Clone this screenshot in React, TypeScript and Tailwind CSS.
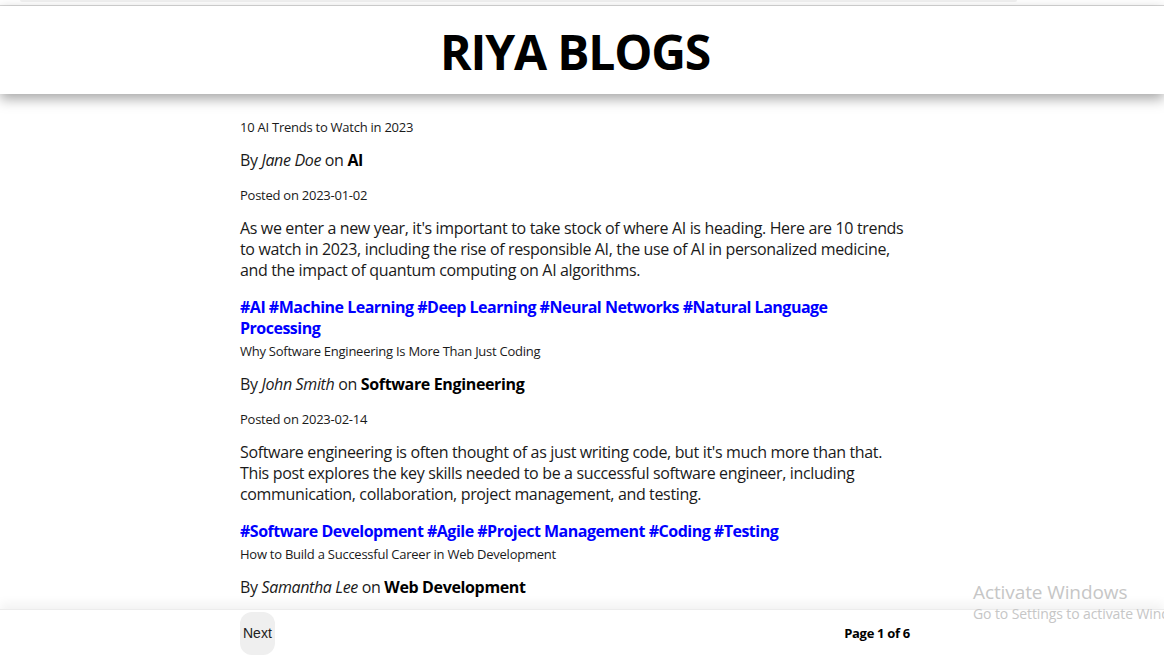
const posts = [
  {
    title: "10 AI Trends to Watch in 2023",
    author: "Jane Doe",
    category: "AI",
    date: "2023-01-02",
    body: "As we enter a new year, it's important to take stock of where AI is heading. Here are 10 trends to watch in 2023, including the rise of responsible AI, the use of AI in personalized medicine, and the impact of quantum computing on AI algorithms.",
    tags: ["AI", "Machine Learning", "Deep Learning", "Neural Networks", "Natural Language Processing"],
  },
  {
    title: "Why Software Engineering Is More Than Just Coding",
    author: "John Smith",
    category: "Software Engineering",
    date: "2023-02-14",
    body: "Software engineering is often thought of as just writing code, but it's much more than that. This post explores the key skills needed to be a successful software engineer, including communication, collaboration, project management, and testing.",
    tags: ["Software Development", "Agile", "Project Management", "Coding", "Testing"],
  },
  {
    title: "How to Build a Successful Career in Web Development",
    author: "Samantha Lee",
    category: "Web Development",
    date: "2023-03-08",
    body: "Web development is a fast-growing field with plenty of opportunities. Here is what it takes to build a long and rewarding career.",
    tags: ["Web Development", "Career"],
  },
];

export default function App() {
  return (
    <div className="relative h-[655px] w-[1164px] overflow-hidden bg-white text-[#1a1a1a] font-['Open_Sans',sans-serif] flex flex-col">
      {/* top strip */}
      <div className="h-[6px] shrink-0 border-b border-[#d9d9d9] flex">
        <div className="ml-[20px] h-[2px] w-[997px] rounded-b bg-[#f1f1f1]" />
      </div>

      <header className="relative z-10 h-[88px] shrink-0 bg-white shadow-[0_5px_12px_rgba(0,0,0,0.35)] pr-[14px] pt-[4px] flex items-center justify-center">
        <h1 className="text-[48px] font-bold tracking-[-1.2px] text-black leading-none">RIYA BLOGS</h1>
      </header>

      <main className="flex-1 overflow-hidden pr-[14px] pt-[25px]">
        <div className="mx-auto w-[670px]">
          {posts.map((post) => (
            <article key={post.title}>
              <h2 className="text-[13px] leading-[17px] tracking-[-0.25px] mb-[14px]">{post.title}</h2>
              <p className="text-[16px] leading-[21px] tracking-[-0.35px] mb-[16px]">
                By <em>{post.author}</em> on <strong className="font-bold text-black">{post.category}</strong>
              </p>
              <p className="text-[13px] leading-[17px] tracking-[-0.25px] mb-[14px]">Posted on {post.date}</p>
              <p className="text-[16px] leading-[21px] tracking-[-0.35px] mb-[16px]">{post.body}</p>
              <p className="text-[16px] leading-[21px] tracking-[-0.5px] font-bold text-[#0000ff] mb-[4px] pr-[80px]">
                {post.tags.map((t) => "#" + t).join(" ")}
              </p>
            </article>
          ))}
        </div>
      </main>

      <footer className="relative z-10 h-[46px] shrink-0 bg-white border-t border-[#ececec] shadow-[0_-6px_10px_rgba(0,0,0,0.05)] pr-[14px] pt-[2px]">
        <div className="mx-auto w-[670px] flex items-center justify-between">
          <button className="h-[43px] rounded-[12px] bg-[#efefef] px-[3px] text-[14px] text-[#222] font-['Liberation_Sans',sans-serif]">
            Next
          </button>
          <span className="text-[13px] font-bold text-black tracking-[-0.3px]">Page 1 of 6</span>
        </div>
      </footer>

      {/* OS watermark */}
      <div className="pointer-events-none absolute left-[973px] top-[580px] z-20 whitespace-nowrap text-[#c6c6c6]">
        <div className="text-[19px] leading-[24px] tracking-[-0.1px]">Activate Windows</div>
        <div className="text-[14px] leading-[20px] tracking-[-0.1px]">Go to Settings to activate Windows.</div>
      </div>
    </div>
  );
}
